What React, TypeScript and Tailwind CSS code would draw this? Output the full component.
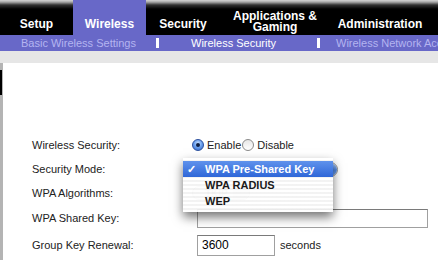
import React from 'react';

const tabs = [
  { label: 'Setup', w: 'w-[73px]' },
  { label: 'Wireless', w: 'w-[73px]', active: true },
  { label: 'Security', w: 'w-[74px]' },
  { label: 'Applications &\nGaming', w: 'w-[110px]', two: true },
  { label: 'Administration', w: 'w-[100px]' },
];

const Radio: React.FC<{ checked?: boolean }> = ({ checked }) =>
  checked ? (
    <span className="w-[12px] h-[12px] rounded-full border border-[#2a4f9e] bg-[radial-gradient(circle_at_50%_35%,#cfe3ff_0%,#6ea2ee_45%,#2d63c9_100%)] flex items-center justify-center shrink-0">
      <span className="w-[4px] h-[4px] rounded-full bg-[#0d1f44]" />
    </span>
  ) : (
    <span className="w-[12px] h-[12px] rounded-full border border-[#8a8a8a] bg-[linear-gradient(to_bottom,#e6e6e6,#ffffff)] shrink-0" />
  );

const Row: React.FC<{ label: string; h: string; children?: React.ReactNode }> = ({ label, h, children }) => (
  <div className={`flex items-center ${h}`}>
    <div className="w-[189px] shrink-0 pl-[29px] text-[11px] text-[#222]">{label}</div>
    <div className="flex items-center">{children}</div>
  </div>
);

export default function App() {
  return (
    <div className="relative w-[438px] h-[260px] overflow-hidden bg-white font-['Liberation_Sans',Arial,sans-serif]">
      {/* top tab bar */}
      <div className="flex h-[35px] bg-[linear-gradient(to_bottom,#d4d4d4_0px,#a8a8a8_2px,#303030_5px,#000_9px)]">
        {tabs.map((t) => (
          <div
            key={t.label}
            className={`${t.w} shrink-0 flex items-end justify-center text-center whitespace-pre text-white font-bold text-[12px] ${
              t.two ? 'leading-[11px] pb-[2px]' : 'leading-[12px] pb-[5px]'
            } ${t.active ? 'bg-[#6868c8]' : ''}`}
          >
            {t.label}
          </div>
        ))}
      </div>

      {/* sub navigation */}
      <div className="flex items-center h-[16px] bg-[#6868c8] text-[11px] whitespace-nowrap">
        <div className="w-[156px] shrink-0 pl-[21px] text-[#b4b4f0]">Basic Wireless Settings</div>
        <div className="w-[3px] h-[10px] shrink-0 bg-white" />
        <div className="w-[158px] shrink-0 pl-[32px] text-white">Wireless Security</div>
        <div className="w-[3px] h-[10px] shrink-0 bg-white" />
        <div className="pl-[16px] shrink-0 text-[#b4b4f0]">Wireless Network Access</div>
      </div>
      <div className="h-[12px] bg-[#e6e6e6]" />

      {/* content */}
      <div className="flex h-[197px]">
        <div className="w-[3px] shrink-0 bg-[#b4b4b4] flex flex-col">
          <div className="mt-[7px] h-[25px] w-[2px] bg-black" />
        </div>
        <div className="flex-1 pt-[70px]">
          <Row label="Wireless Security:" h="h-[24px]">
            <Radio checked />
            <span className="ml-[3px] text-[11px] text-[#222]">Enable</span>
            <span className="ml-[1px]" />
            <Radio />
            <span className="ml-[3px] text-[11px] text-[#222]">Disable</span>
          </Row>
          <Row label="Security Mode:" h="h-[24px]">
            <div className="w-[146px] h-[15px] rounded-[8px] border border-[#8b8b8b] bg-white flex justify-end overflow-hidden">
              <div className="w-[18px] h-full bg-[linear-gradient(to_bottom,#a9c8f5,#4f86e0_55%,#7eaaf0)]" />
            </div>
          </Row>
          <Row label="WPA Algorithms:" h="h-[24px]">
            <div className="w-[58px] h-[14px] rounded-[7px] border border-[#c6c6c6] bg-[#f4f4f4] flex items-center justify-between pl-[12px] overflow-hidden">
              <span className="text-[10px] text-[#b0b0b0] font-bold">TKIP</span>
              <span className="w-[16px] h-full bg-[#e2e2e2]" />
            </div>
          </Row>
          <Row label="WPA Shared Key:" h="h-[26px]">
            <div className="ml-[5px] w-[231px] h-[19px] border border-[#a0a0a0] border-t-[#7a7a7a] bg-white" />
          </Row>
          <Row label="Group Key Renewal:" h="h-[28px]">
            <div className="ml-[5px] w-[78px] h-[21px] border border-[#a0a0a0] border-t-[#7a7a7a] bg-white flex items-center pl-[4px] text-[12px] text-black">
              3600
            </div>
            <span className="ml-[5px] text-[11px] text-[#222]">seconds</span>
          </Row>
        </div>
      </div>

      {/* popup menu */}
      <div className="absolute left-[183px] top-[158px] w-[150px] py-[3px] font-bold text-[11px] bg-[repeating-linear-gradient(to_bottom,rgba(255,255,255,0.93)_0px,rgba(255,255,255,0.93)_2px,rgba(242,242,242,0.93)_2px,rgba(242,242,242,0.93)_4px)] shadow-[0_5px_10px_rgba(0,0,0,0.55)]">
        <div className="flex items-center h-[16px] bg-[linear-gradient(to_bottom,#5f92ec,#2f67d8)] text-white">
          <span className="w-[22px] pl-[4px]">✓</span>
          <span>WPA Pre-Shared Key</span>
        </div>
        <div className="flex items-center h-[16px] pl-[22px] text-[#1a1a1a]">WPA RADIUS</div>
        <div className="flex items-center h-[16px] pl-[22px] text-[#1a1a1a]">WEP</div>
      </div>
    </div>
  );
}
